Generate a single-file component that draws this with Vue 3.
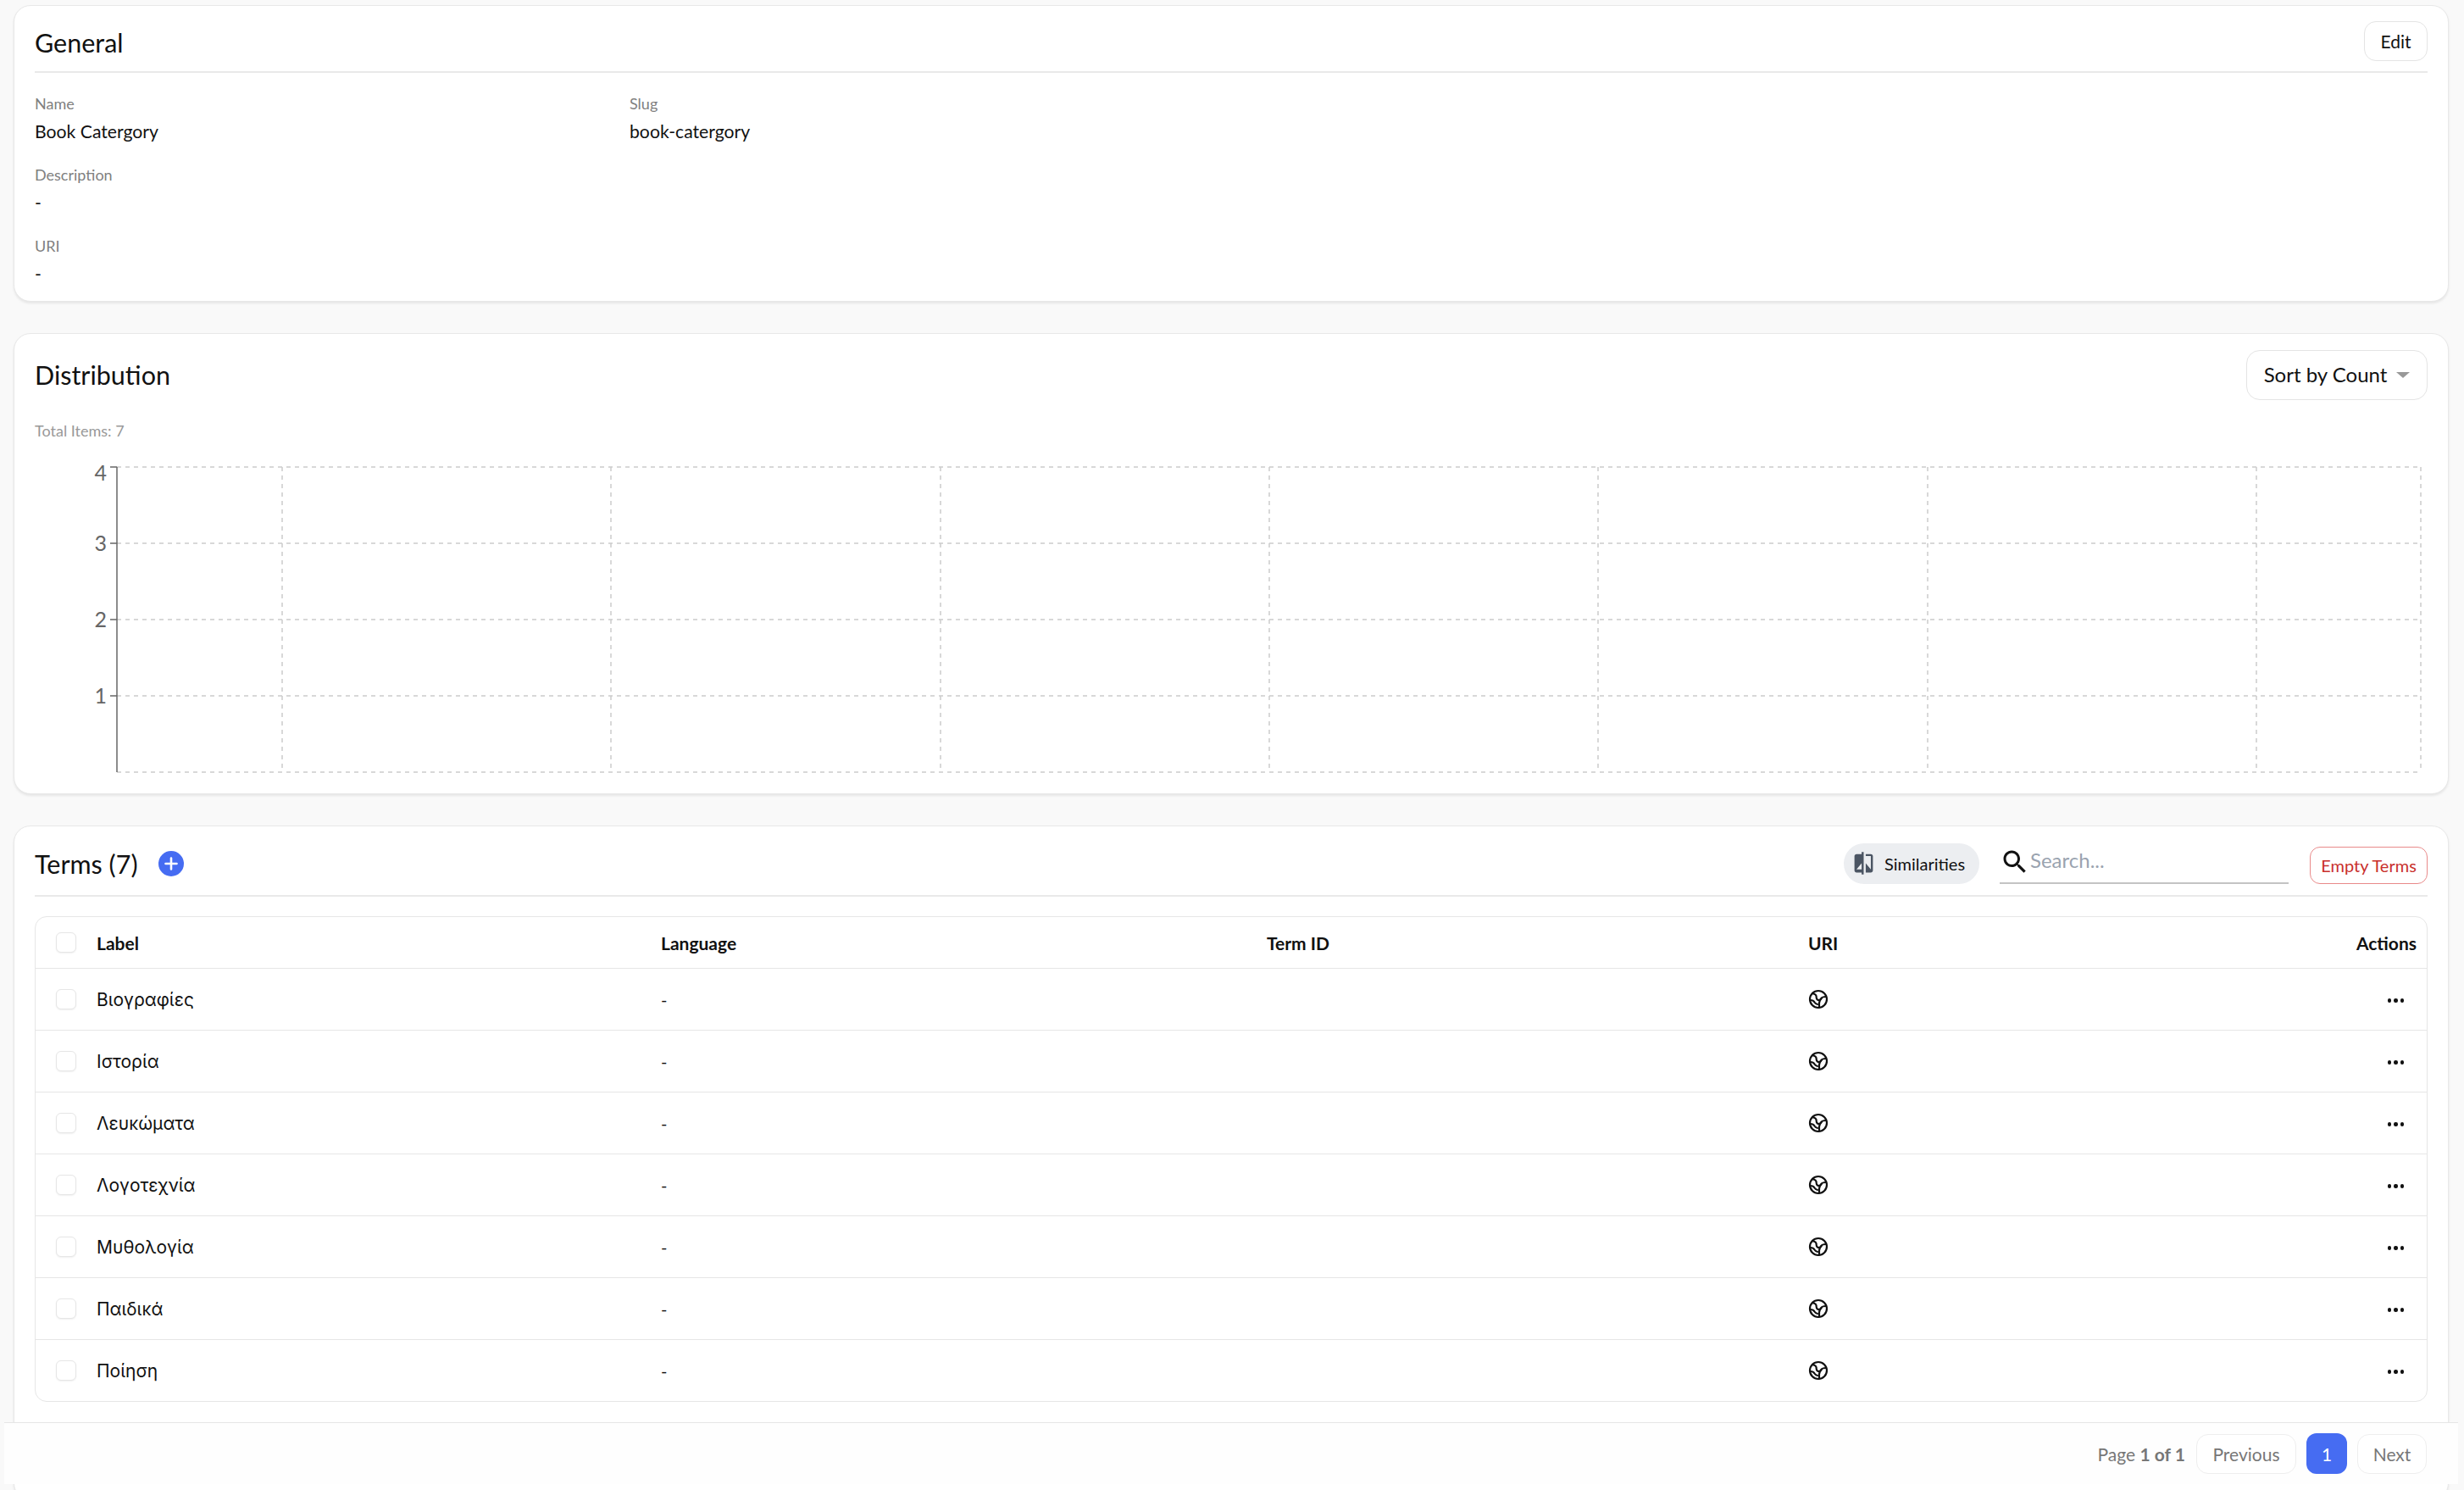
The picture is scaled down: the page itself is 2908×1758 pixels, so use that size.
<template>
  <div class="page">
    <section class="card general">
      <div class="card-head ruled">
        <h2>General</h2>
        <button class="btn edit">Edit</button>
      </div>
      <div class="fields">
        <div class="field">
          <div class="field-label">Name</div>
          <div class="field-value">Book Catergory</div>
        </div>
        <div class="field">
          <div class="field-label">Slug</div>
          <div class="field-value">book-catergory</div>
        </div>
        <div class="field wide">
          <div class="field-label">Description</div>
          <div class="field-value">-</div>
        </div>
        <div class="field wide">
          <div class="field-label">URI</div>
          <div class="field-value">-</div>
        </div>
      </div>
    </section>

    <section class="card distribution">
      <div class="card-head dist-head">
        <h2>Distribution</h2>
        <button class="btn sort">Sort by Count <span class="caret"></span></button>
      </div>
      <div class="total">Total Items: 7</div>
      <svg class="chart" width="2824" height="380">
        <g class="grid">
          <line v-for="y in gridY" :key="'h' + y" x1="97" :x2="2816" :y1="y" :y2="y" />
          <line v-for="x in gridX" :key="'v' + x" :x1="x" :x2="x" y1="11" y2="371" />
        </g>
        <g class="axis">
          <line x1="97" x2="97" y1="11" y2="371" />
          <line v-for="t in ticks" :key="t.label" x1="89" x2="97" :y1="t.y" :y2="t.y" />
        </g>
        <text v-for="t in ticks" :key="'l' + t.label" x="85" :y="t.labelY" text-anchor="end">{{ t.label }}</text>
      </svg>
    </section>

    <section class="card terms">
      <div class="card-head ruled terms-head">
        <div class="terms-title">
          <h2>Terms (7)</h2>
          <span class="add">
            <svg width="18" height="18" viewBox="0 0 18 18"><path d="M9 2.5v13M2.5 9h13" stroke="#fff" stroke-width="2.6" stroke-linecap="round" /></svg>
          </span>
        </div>
        <div class="terms-tools">
          <button class="similar">
            <svg width="29" height="29" viewBox="0 0 24 24" fill="#4b5563"><path d="M10 3H5c-1.1 0-2 .9-2 2v14c0 1.1.9 2 2 2h5v2h2V1h-2v2zm0 15H5l5-6v6zm9-15h-5v2h5v13l-5-6v9h5c1.1 0 2-.9 2-2V5c0-1.1-.9-2-2-2z" /></svg>
            Similarities
          </button>
          <div class="search">
            <svg width="36" height="36" viewBox="0 0 24 24" fill="#111"><path d="M15.5 14h-.79l-.28-.27C15.41 12.59 16 11.11 16 9.5 16 5.91 13.09 3 9.5 3S3 5.91 3 9.5 5.91 16 9.5 16c1.61 0 3.09-.59 4.23-1.57l.27.28v.79l5 4.99L20.49 19l-4.99-5zm-6 0C7.01 14 5 11.99 5 9.5S7.01 5 9.5 5 14 7.01 14 9.5 11.99 14 9.5 14z" /></svg>
            <span>Search...</span>
          </div>
          <button class="btn empty">Empty Terms</button>
        </div>
      </div>

      <div class="table-wrap">
        <table>
          <colgroup>
            <col class="c-check" /><col class="c-label" /><col class="c-lang" /><col class="c-id" /><col />
          </colgroup>
          <thead>
            <tr>
              <th><span class="check"></span></th>
              <th>Label</th>
              <th>Language</th>
              <th>Term ID</th>
              <th>URI</th>
              <th class="right">Actions</th>
            </tr>
          </thead>
          <tbody>
            <tr v-for="t in terms" :key="t">
              <td><span class="check"></span></td>
              <td class="term">{{ t }}</td>
              <td>-</td>
              <td></td>
              <td>
                <svg class="globe" width="24" height="24" viewBox="0 0 24 24" fill="none" stroke="#111" stroke-width="2.2" stroke-linecap="round" stroke-linejoin="round">
                  <circle cx="12" cy="12" r="10" />
                  <path d="M5 5c2.500 1 4 1 4.500 3s-.5 3 1.500 4.500c1.500 1 3.500 .5 4.500-1.500 .7-1.500 2-2 5.500-2" />
                  <path d="M15.500 11c-1.500 2-2.500 3-2.500 5.500v5" />
                  <path d="M2.500 13c2.500 0 4 .5 5 2.500 .7 1.300 1.700 2 3.500 2.500" />
                </svg>
              </td>
              <td class="right"><span class="dots"><i></i><i></i><i></i></span></td>
            </tr>
          </tbody>
        </table>
      </div>
    </section>

    <div class="pager">
      <span class="page-info">Page <b>1 of 1</b></span>
      <button class="btn pg prev">Previous</button>
      <button class="pg-current">1</button>
      <button class="btn pg next">Next</button>
    </div>
  </div>
</template>

<script setup>
const terms = ['Βιογραφίες', 'Ιστορία', 'Λευκώματα', 'Λογοτεχνία', 'Μυθολογία', 'Παιδικά', 'Ποίηση']

const gridY = [11, 101, 191, 281, 371]
const gridX = [292, 680, 1069, 1457, 1845, 2234, 2622, 2816]

const ticks = [
  { label: 4, y: 11, labelY: 27 },
  { label: 3, y: 101, labelY: 110 },
  { label: 2, y: 191, labelY: 200 },
  { label: 1, y: 281, labelY: 290 }
]
</script>

<style>
html, body { background: #f9f9f9; }
</style>

<style scoped>
.page {
  position: relative;
  height: 1758px;
  overflow: hidden;
  padding: 6px 18px 0 16px;
  box-sizing: border-box;
  display: flex;
  flex-direction: column;
  gap: 37px;
  background: #f9f9f9;
  font-family: Lato, "Liberation Sans", sans-serif;
  font-size: 21px;
  color: #111;
}
.card {
  flex: none;
  background: #fff;
  border: 1px solid #e8e8e8;
  border-radius: 20px;
  box-shadow: 0 2px 3px rgba(0, 0, 0, 0.08);
  padding: 0 24px;
  box-sizing: border-box;
}
.general { height: 350px; }
.distribution { height: 544px; }
.terms { height: 796px; }
h2 { margin: 2px 0 0; font-size: 30.5px; font-weight: 400; color: #111; }
.card-head {
  display: flex;
  justify-content: space-between;
  align-items: center;
}
.ruled { height: 71px; padding-top: 6px; border-bottom: 2px solid #e9e9e9; }
.terms-head { height: 75px; }
.terms-head h2 { margin-top: 0; }
.btn {
  font: inherit;
  color: #111;
  background: #fff;
  border: 1px solid #e4e4e4;
  border-radius: 14px;
  padding: 0;
  box-sizing: border-box;
}
.edit { width: 75px; height: 47px; font-size: 21px; }

.fields {
  display: grid;
  grid-template-columns: 702px 1fr;
  row-gap: 18px;
  padding-top: 20px;
}
.field.wide { grid-column: 1 / -1; }
.field-label { font-size: 18px; line-height: 33px; color: #808080; }
.field-value { font-size: 21.2px; line-height: 33px; }

.dist-head { height: 96px; }
.dist-head h2 { margin-top: 0; }
.sort {
  width: 214px;
  height: 59px;
  padding-bottom: 2px;
  font-size: 24px;
  border-radius: 16px;
  display: flex;
  align-items: center;
  justify-content: center;
  gap: 11px;
}
.caret {
  width: 0;
  height: 0;
  margin-top: 2px;
  border-left: 8px solid transparent;
  border-right: 8px solid transparent;
  border-top: 7px solid #999;
}
.total { margin-top: 2px; font-size: 18px; line-height: 32px; color: #999; }
.chart { display: block; margin-top: 16px; }
.grid line { stroke: #ccc; stroke-width: 1.5; stroke-dasharray: 5 5; }
.axis line { stroke: #666; stroke-width: 1.5; }
.chart text { font-size: 25px; fill: #666; }

.terms-title { display: flex; align-items: center; gap: 24px; }
.add {
  width: 30px;
  height: 30px;
  border-radius: 50%;
  background: #466cf2;
  display: flex;
  align-items: center;
  justify-content: center;
}
.terms-tools { display: flex; align-items: flex-end; height: 48px; }
.similar {
  font: inherit;
  font-size: 20px;
  color: #111;
  width: 160px;
  height: 48px;
  border: none;
  border-radius: 24px;
  background: #eceef1;
  display: flex;
  align-items: center;
  gap: 10px;
  padding: 0 0 0 9px;
  box-sizing: border-box;
}
.search {
  width: 341px;
  height: 48px;
  margin-left: 24px;
  border-bottom: 2px solid #c4c4c4;
  display: flex;
  align-items: center;
  box-sizing: border-box;
  gap: 0;
  font-size: 24px;
  color: #9aa3af;
}
.search span { margin-bottom: 6px; }
.search svg { margin-bottom: 2px; }
.empty {
  width: 139px;
  height: 44px;
  margin-left: 25px;
  font-size: 20px;
  color: #c9302c;
  border-color: #e98a8a;
  border-radius: 12px;
}

.table-wrap {
  margin-top: 23px;
  border: 1px solid #e6e6e6;
  border-radius: 14px;
  overflow: hidden;
}
table { width: 100%; border-collapse: collapse; table-layout: fixed; }
.c-check { width: 72px; }
.c-label { width: 666px; }
.c-lang { width: 715px; }
.c-id { width: 639px; }
th {
  height: 60px;
  padding: 0;
  text-align: left;
  font-size: 21px;
  font-weight: 700;
  border-bottom: 1px solid #e6e6e6;
}
td {
  height: 72px;
  padding: 0;
  font-size: 20px;
  border-bottom: 1px solid #e6e6e6;
}
tbody tr:last-child td { border-bottom: none; }
.term { font-family: Inter, "Liberation Sans", sans-serif; font-size: 21px; }
.right { text-align: right; padding-right: 12px; }
.check {
  display: block;
  width: 24px;
  height: 24px;
  margin-left: 24px;
  background: #fff;
  border: 1px solid #e6e6e6;
  border-radius: 6px;
  box-shadow: 0 1px 2px rgba(0, 0, 0, 0.06);
  box-sizing: border-box;
}
.globe { display: block; }
.dots { display: inline-flex; gap: 3px; margin: 0 15px 3px 0; vertical-align: middle; }
.dots i { width: 4.5px; height: 4.5px; border-radius: 50%; background: #111; }

.pager {
  position: absolute;
  left: 5px;
  right: 7px;
  bottom: 7px;
  height: 73px;
  background: #fefefe;
  border-top: 1px solid #e6e6e6;
  box-sizing: border-box;
  display: flex;
  align-items: center;
  justify-content: flex-end;
  padding-right: 37px;
  font-size: 21px;
  color: #777;
}
.page-info { margin-right: 13px; }
.pg {
  height: 47px;
  color: #777;
  border-color: #eee;
  font-size: 21px;
}
.prev { width: 118px; margin-right: 12px; }
.next { width: 82px; margin-left: 12px; }
.pg-current {
  width: 48px;
  height: 48px;
  border: none;
  border-radius: 12px;
  background: #466cf2;
  color: #fff;
  font: inherit;
}
</style>
